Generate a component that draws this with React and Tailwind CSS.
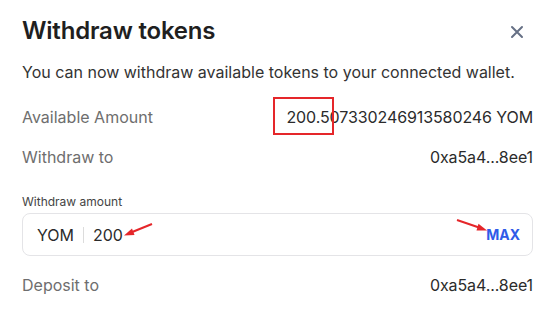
import React from "react";

const Row = ({ label, value, className = "" }) => (
  <div className={`flex items-center justify-between h-6 text-base ${className}`}>
    <span className="text-[#6e6e6e]">{label}</span>
    <span className="text-[#2b2b2b] tracking-[-0.1px]">{value}</span>
  </div>
);

const App = () => {
  return (
    <div className="relative w-[546px] h-[317px] overflow-hidden bg-white font-['Inter',sans-serif]">
      <div className="pl-[22px] pr-[13px] pt-[15px]">
        <div className="flex items-center justify-between h-8">
          <h2 className="text-2xl font-semibold text-[#1f1f1f] tracking-[-0.2px]">Withdraw tokens</h2>
          <button className="mr-[9px] mt-[1px] text-[#667085]">
            <svg width="14" height="14" viewBox="0 0 14 14" fill="none">
              <path d="M2 2L12 12M12 2L2 12" stroke="currentColor" strokeWidth="2" strokeLinecap="round" />
            </svg>
          </button>
        </div>
        <p className="mt-[13px] h-6 text-base leading-6 text-[#333]">
          You can now withdraw available tokens to your connected wallet.
        </p>

        <Row className="mt-[21px]" label="Available Amount" value="200.507330246913580246 YOM" />
        <Row className="mt-4" label="Withdraw to" value="0xa5a4...8ee1" />

        <div className="mt-[25px] h-4 text-xs leading-4 text-[#444]">Withdraw amount</div>
        <div className="mt-[3px] h-[43px] flex items-center border border-[#e4e4e7] rounded-lg pl-[14px] pr-[12px]">
          <span className="text-base text-[#2b2b2b]">YOM</span>
          <span className="ml-[9px] mr-[9px] w-px h-4 bg-[#dcdcdc]" />
          <span className="text-base text-[#2b2b2b]">200</span>
          <span className="ml-auto text-sm font-bold text-[#2f5be8]">MAX</span>
        </div>

        <Row className="mt-[17px]" label="Deposit to" value="0xa5a4...8ee1" />
      </div>

      {/* red annotations */}
      <div className="absolute left-[273px] top-[97px] w-[61px] h-[38px] border-2 border-[#e5262a]" />
      <svg className="absolute inset-0 pointer-events-none" width="546" height="317">
        <line x1="152" y1="224" x2="131" y2="232.5" stroke="#e5262a" strokeWidth="2" />
        <polygon points="124,235.5 132,228.5 134.5,235" fill="#e5262a" />
        <line x1="457" y1="220" x2="479" y2="227.5" stroke="#e5262a" strokeWidth="2" />
        <polygon points="487,230.5 478.5,223.8 476.5,230.5" fill="#e5262a" />
      </svg>
    </div>
  );
};

export default App;
